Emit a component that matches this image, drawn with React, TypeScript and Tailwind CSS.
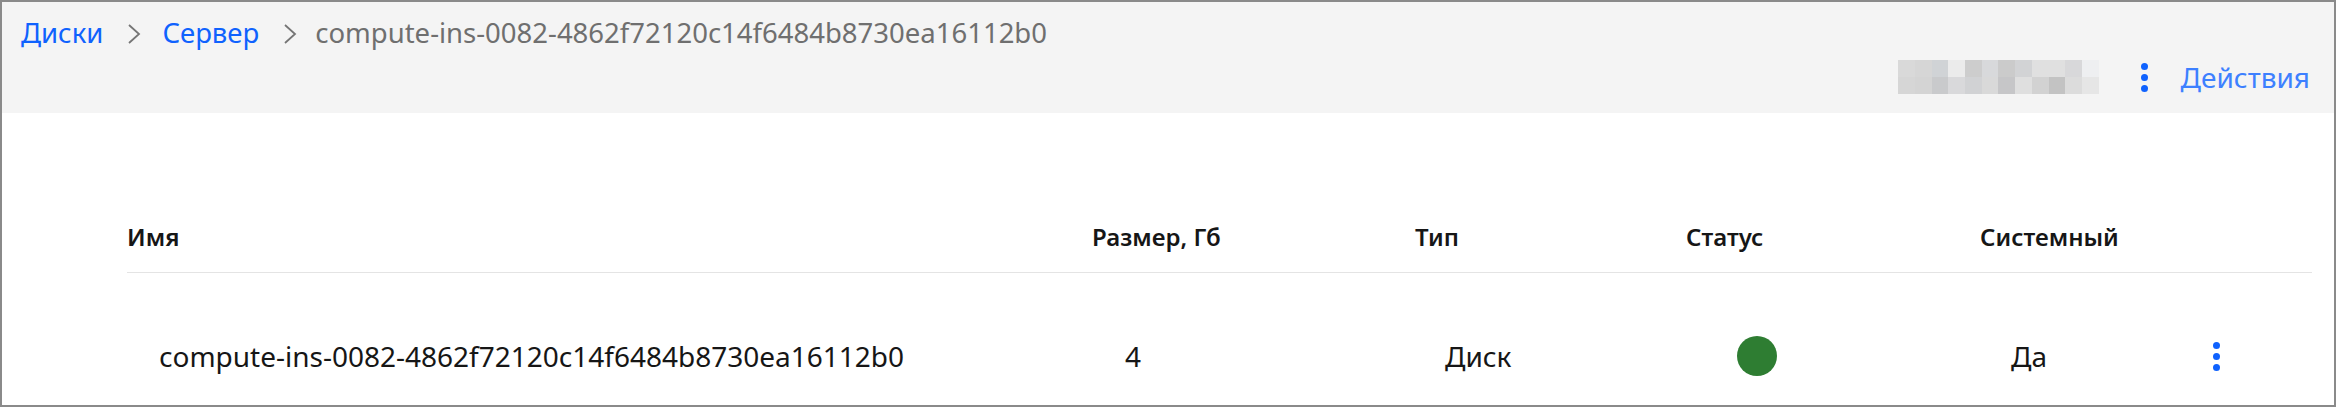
import React from "react";

const PIXELS_TOP = [
  "bg-[#d9d9d9]",
  "bg-[#d6d6d6]",
  "bg-[#d0d3d6]",
  "bg-[#ebebeb]",
  "bg-[#cdcdcd]",
  "bg-[#d8d9db]",
  "bg-[#cbcbcb]",
  "bg-[#d2d3d5]",
  "bg-[#e0e0e0]",
  "bg-[#e0e0e0]",
  "bg-[#d8d8da]",
  "bg-[#eeeff1]",
];

const PIXELS_BOTTOM = [
  "bg-[#d6d6d6]",
  "bg-[#d4d4d4]",
  "bg-[#c9cacc]",
  "bg-[#d9d9db]",
  "bg-[#d1d2d4]",
  "bg-[#d9d9d9]",
  "bg-[#c6c6c8]",
  "bg-[#dfdfdf]",
  "bg-[#d2d2d2]",
  "bg-[#c3c3c3]",
  "bg-[#dcdcdc]",
  "bg-[#e6e6e6]",
];

const Chevron: React.FC = () => (
  <svg width="14" height="22" viewBox="0 0 14 22" className="shrink-0">
    <polyline
      points="2,2 12,11 2,20"
      fill="none"
      stroke="#757575"
      strokeWidth="1.8"
      strokeLinejoin="miter"
    />
  </svg>
);

const Kebab: React.FC = () => (
  <div className="flex flex-col gap-[4px]">
    <span className="w-[7px] h-[7px] rounded-full bg-[#0f62fe]" />
    <span className="w-[7px] h-[7px] rounded-full bg-[#0f62fe]" />
    <span className="w-[7px] h-[7px] rounded-full bg-[#0f62fe]" />
  </div>
);

const App: React.FC = () => {
  return (
    <div className="w-[2336px] h-[407px] overflow-hidden border-2 border-[#8a8a8a] bg-white font-['Noto_Sans',sans-serif]">
      {/* Header */}
      <div className="h-[111px] bg-[#f4f4f4]">
        <div className="flex items-center pl-[19px] pt-[11px] h-[51px] text-[27.5px] leading-[40px]">
          <span className="text-[#0f62fe]">Диски</span>
          <span className="ml-[24px] mr-[21px] mt-[2px]">
            <Chevron />
          </span>
          <span className="text-[#0f62fe]">Сервер</span>
          <span className="ml-[24px] mr-[18px] mt-[2px]">
            <Chevron />
          </span>
          <span className="text-[#6f6f6f]">
            compute-ins-0082-4862f72120c14f6484b8730ea16112b0
          </span>
        </div>
        <div className="flex items-center justify-end pr-[24px] h-[48px]">
          {/* blurred account name */}
          <div className="flex flex-col">
            <div className="flex">
              {PIXELS_TOP.map((c, i) => (
                <span key={i} className={`w-[16.7px] h-[17px] ${c}`} />
              ))}
            </div>
            <div className="flex">
              {PIXELS_BOTTOM.map((c, i) => (
                <span key={i} className={`w-[16.7px] h-[17px] ${c}`} />
              ))}
            </div>
          </div>
          <div className="ml-[42px]">
            <Kebab />
          </div>
          <span className="ml-[33px] text-[28px] leading-[40px] text-[#3d80ff]">
            Действия
          </span>
        </div>
      </div>

      {/* Table */}
      <div className="ml-[125px] mr-[22px] pt-[88px]">
        <div className="flex items-center h-[72px] border-b border-[#e4e4e4] text-[24px] font-semibold text-[#161616]">
          <div className="w-[965px]">Имя</div>
          <div className="w-[323px]">Размер, Гб</div>
          <div className="w-[271px]">Тип</div>
          <div className="w-[294px]">Статус</div>
          <div>Системный</div>
        </div>
        <div className="flex items-center h-[166px] pl-[32px] text-[28px] text-[#161616]">
          <div className="w-[966px]">compute-ins-0082-4862f72120c14f6484b8730ea16112b0</div>
          <div className="w-[320px]">4</div>
          <div className="w-[292px]">Диск</div>
          <div className="w-[274px]">
            <span className="block w-[40px] h-[40px] rounded-full bg-[#2e7d32]" />
          </div>
          <div className="w-[202px]">Да</div>
          <Kebab />
        </div>
      </div>
    </div>
  );
};

export default App;
